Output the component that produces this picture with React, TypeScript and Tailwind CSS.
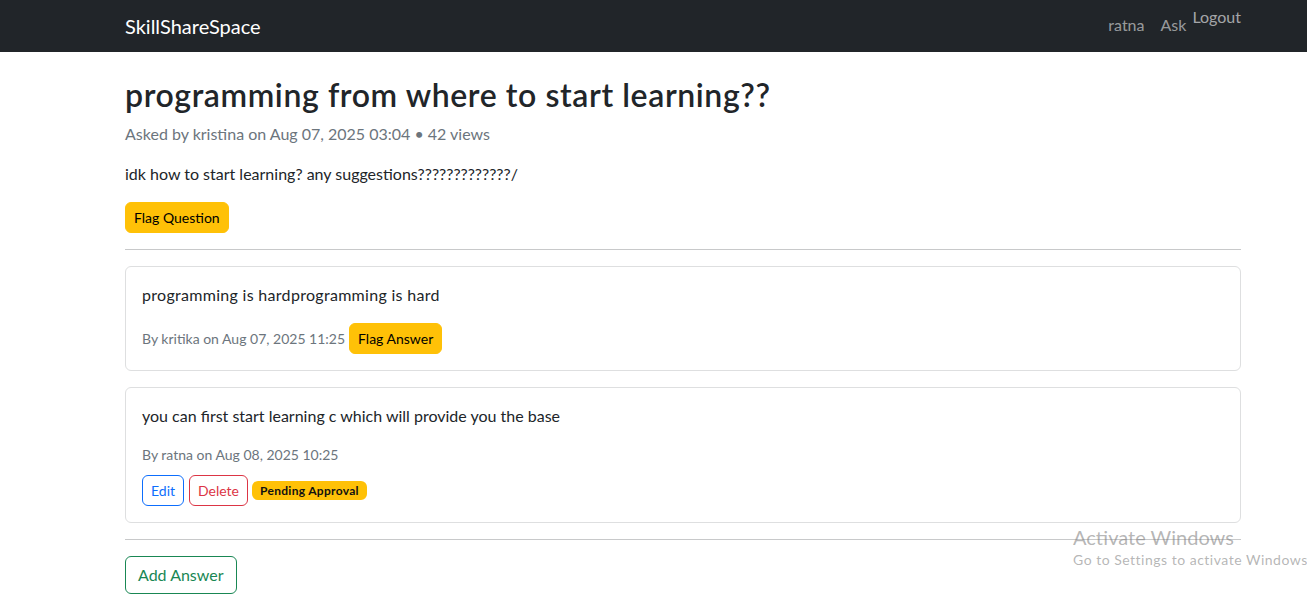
import React from "react";

const font = { fontFamily: 'Lato, "Noto Sans", sans-serif' };

export default function App() {
  return (
    <div className="relative min-h-[599px] bg-white text-[#212529] overflow-hidden" style={font}>
      <nav className="h-[52px] bg-[#212529]">
        <div className="ml-[113px] w-[1140px] px-3 h-full flex items-center justify-between">
          <span className="text-[20px] text-white leading-[30px]">SkillShareSpace</span>
          <div className="flex items-start h-full">
            <span className="mt-[13px] px-2 text-[16px] leading-6 text-[rgba(255,255,255,0.55)]">ratna</span>
            <span className="mt-[13px] px-2 text-[16px] leading-6 text-[rgba(255,255,255,0.55)]">Ask</span>
            <span className="mt-[5px] ml-[-2px] text-[16px] leading-6 text-[rgba(255,255,255,0.6)]">Logout</span>
          </div>
        </div>
      </nav>

      <main className="ml-[113px] w-[1140px] px-3 pt-[24px]">
        <h1 className="text-[32px] leading-[38px] font-semibold tracking-[0.6px] mb-2">programming from where to start learning??</h1>
        <p className="text-[16px] leading-6 text-[#6c757d] mb-4">Asked by kristina on Aug 07, 2025 03:04 • 42 views</p>
        <p className="text-[16px] leading-6 mb-4">idk how to start learning? any suggestions?????????????/</p>
        <button className="h-[31px] px-2 rounded-[6px] bg-[#ffc107] text-[14px] text-black border border-[#ffc107]">Flag Question</button>
        <hr className="my-4 border-t border-[#c8c9ca]" />

        <div className="border border-[#dedfe0] rounded-[6px] p-4 mb-4">
          <p className="text-[16px] leading-6 tracking-[0.3px] mb-4">programming is hardprogramming is hard</p>
          <div className="flex items-center">
            <span className="text-[14px] leading-[21px] text-[#6c757d]">By kritika on Aug 07, 2025 11:25</span>
            <button className="ml-[4px] h-[31px] px-2 rounded-[6px] bg-[#ffc107] text-[14px] text-black border border-[#ffc107]">Flag Answer</button>
          </div>
        </div>

        <div className="border border-[#dedfe0] rounded-[6px] p-4">
          <p className="text-[16px] leading-6 mb-4">you can first start learning c which will provide you the base</p>
          <p className="text-[14px] leading-[21px] text-[#6c757d] mb-[10px]">By ratna on Aug 08, 2025 10:25</p>
          <div className="flex items-center gap-[5px]">
            <button className="h-[31px] px-2 rounded-[6px] border border-[#0d6efd] text-[#0d6efd] text-[14px] bg-white">Edit</button>
            <button className="h-[31px] px-2 rounded-[6px] border border-[#dc3545] text-[#dc3545] text-[14px] bg-white">Delete</button>
            <span className="ml-[-1px] px-2 h-[19px] flex items-center rounded-[6px] bg-[#ffc107] text-[#111] text-[12px] font-bold tracking-[0.3px]">Pending Approval</span>
          </div>
        </div>

        <hr className="my-4 border-t border-[#c8c9ca]" />
        <button className="h-[38px] px-3 rounded-[6px] border border-[#198754] text-[#198754] text-[16px] bg-white">Add Answer</button>
      </main>

      <div className="absolute left-[1073px] top-[524px] pointer-events-none">
        <div className="text-[20px] leading-[26px] text-[rgba(120,120,120,0.55)]">Activate Windows</div>
        <div className="text-[14px] leading-[20px] tracking-[0.5px] text-[rgba(120,120,120,0.55)] whitespace-nowrap">Go to Settings to activate Windows</div>
      </div>
    </div>
  );
}
